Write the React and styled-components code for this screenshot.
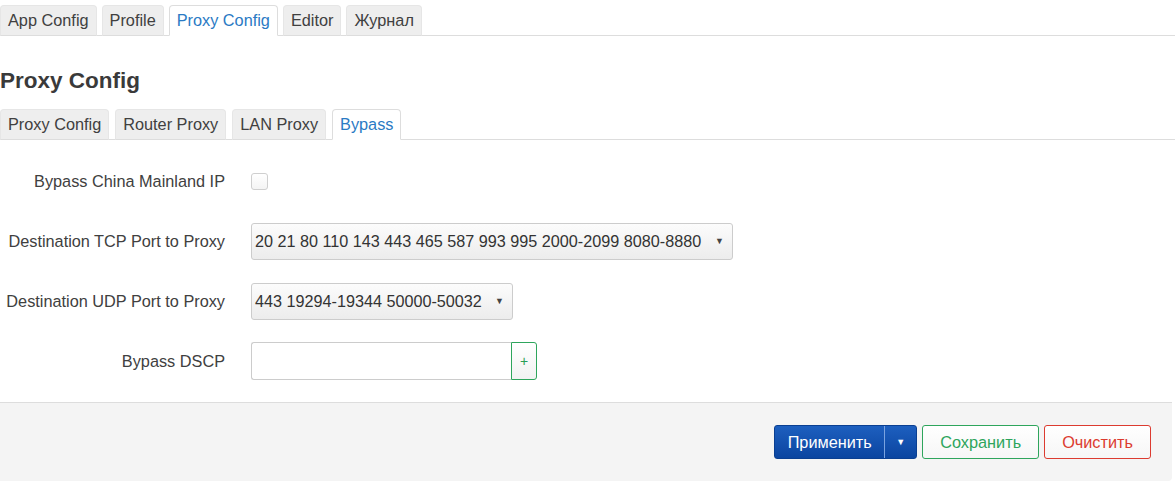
import React from 'react'
import styled, { createGlobalStyle } from 'styled-components'

const Global = createGlobalStyle`
  html, body { margin: 0; padding: 0; background: #fff; }
  body { font-family: "Liberation Sans", Arial, sans-serif; font-size: 16.3px; color: #404040; }
`

const Page = styled.div`
  width: 1175px;
  padding-top: 5px;
`

const TabBar = styled.ul`
  display: flex;
  gap: ${p => p.gap}px;
  list-style: none;
  margin: 0;
  padding: 0;
  border-bottom: 1px solid #ddd;
`

const Tab = styled.li`
  height: 29px;
  line-height: 29px;
  padding: 0 ${p => p.pad}px;
  margin-bottom: -1px;
  border: 1px solid ${p => (p.active ? '#ddd' : '#e6e6e6')};
  border-bottom-color: ${p => (p.active ? '#fff' : '#ddd')};
  border-radius: 4px 4px 0 0;
  background: ${p => (p.active ? '#fff' : '#eee')};
  color: ${p => (p.active ? '#2a7ac4' : '#404040')};
  white-space: nowrap;
`

const Title = styled.h2`
  margin: 32px 0 15px;
  font-size: 22.5px;
  line-height: 26px;
  font-weight: bold;
  color: #3a3a3a;
`

const Form = styled.div`
  padding: 22px 0 22px;
  display: flex;
  flex-direction: column;
  gap: 22px;
`

const Row = styled.div`
  display: flex;
  align-items: center;
  height: 38px;
`

const Label = styled.div`
  width: 225px;
  text-align: right;
  padding-right: 26px;
  flex: none;
`

const Check = styled.span`
  width: 15px;
  height: 15px;
  border: 1px solid #cfcfcf;
  border-radius: 3px;
  background: linear-gradient(#fff, #f4f4f4);
`

const Select = styled.div`
  display: flex;
  align-items: center;
  height: 37px;
  width: ${p => p.w}px;
  box-sizing: border-box;
  padding: 0 8px 0 3px;
  border: 1px solid #ccc;
  border-radius: 3px;
  background: linear-gradient(#fcfcfc, #ececec);
  color: #333;
  font-size: 16.2px;
  span { flex: 1; white-space: nowrap; }
  i { font-style: normal; font-size: 9px; color: #444; }
`

const InputGroup = styled.div`
  display: flex;
  height: 38px;
`

const Input = styled.div`
  width: 260px;
  box-sizing: border-box;
  border: 1px solid #ccc;
  border-right: none;
  border-radius: 3px 0 0 3px;
  background: #fff;
`

const AddBtn = styled.div`
  width: 26px;
  box-sizing: border-box;
  border: 1px solid #2ea55c;
  border-radius: 0 3px 3px 0;
  background: linear-gradient(#fff, #f2f2f2);
  color: #2a9d55;
  display: flex;
  align-items: center;
  justify-content: center;
  font-size: 14px;
`

const Footer = styled.div`
  width: 1172px;
  height: 79px;
  box-sizing: border-box;
  background: #f4f4f4;
  border-top: 1px solid #ddd;
  border-radius: 0 0 4px 0;
  display: flex;
  align-items: center;
  justify-content: flex-end;
  gap: 5px;
  padding: 0 21px 0 0;
`

const Button = styled.div`
  height: 34px;
  box-sizing: border-box;
  padding: 0 ${p => p.pad}px;
  display: flex;
  align-items: center;
  border-radius: 3px;
  border: 1px solid ${p => p.color};
  color: ${p => p.color};
  background: linear-gradient(#ffffff, #f6f6f6);
`

const Split = styled.div`
  display: flex;
  height: 34px;
  border-radius: 3px;
  overflow: hidden;
  background: linear-gradient(#1d5fbf, #0b45a0);
  color: #fff;
  border: 1px solid #0a3f91;
  box-sizing: border-box;
`

const SplitMain = styled.div`
  width: 109px;
  display: flex;
  align-items: center;
  justify-content: center;
  border-right: 1px solid #7aa3e0;
`

const SplitArrow = styled.div`
  width: 31px;
  display: flex;
  align-items: center;
  justify-content: center;
  font-size: 9px;
`

const topTabs = ['App Config', 'Profile', 'Proxy Config', 'Editor', 'Журнал']
const subTabs = ['Proxy Config', 'Router Proxy', 'LAN Proxy', 'Bypass']

export default function App() {
  return (
    <Page>
      <Global />
      <TabBar gap={5}>
        {topTabs.map(t => (
          <Tab key={t} pad={7} active={t === 'Proxy Config'}>{t}</Tab>
        ))}
      </TabBar>
      <Title>Proxy Config</Title>
      <TabBar gap={6}>
        {subTabs.map(t => (
          <Tab key={t} pad={7} active={t === 'Bypass'}>{t}</Tab>
        ))}
      </TabBar>
      <Form>
        <Row>
          <Label>Bypass China Mainland IP</Label>
          <Check />
        </Row>
        <Row>
          <Label>Destination TCP Port to Proxy</Label>
          <Select w={482}>
            <span>20 21 80 110 143 443 465 587 993 995 2000-2099 8080-8880</span>
            <i>▼</i>
          </Select>
        </Row>
        <Row>
          <Label>Destination UDP Port to Proxy</Label>
          <Select w={262}>
            <span>443 19294-19344 50000-50032</span>
            <i>▼</i>
          </Select>
        </Row>
        <Row>
          <Label>Bypass DSCP</Label>
          <InputGroup>
            <Input />
            <AddBtn>+</AddBtn>
          </InputGroup>
        </Row>
      </Form>
      <Footer>
        <Split>
          <SplitMain>Применить</SplitMain>
          <SplitArrow>▼</SplitArrow>
        </Split>
        <Button pad={17} color="#2ea55c">Сохранить</Button>
        <Button pad={17} color="#dc3b30">Очистить</Button>
      </Footer>
    </Page>
  )
}
